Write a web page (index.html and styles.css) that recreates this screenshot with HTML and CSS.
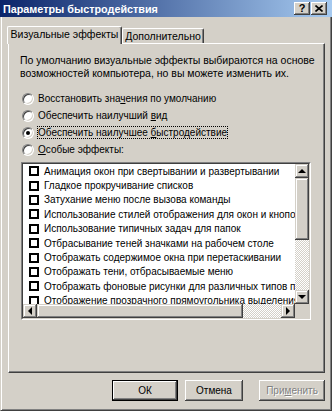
FILE: index.html
```html
<!DOCTYPE html>
<html lang="ru">
<head>
<meta charset="utf-8">
<title>Параметры быстродействия</title>
<link rel="stylesheet" href="styles.css">
</head>
<body>
<div class="window">
  <div class="titlebar">
    <span class="title">Параметры быстродействия</span>
    <div class="caption-buttons">
      <span class="cap-btn">?</span>
      <span class="cap-btn">
        <svg width="8" height="7" viewBox="0 0 8 7"><path d="M0.5 0.5 L7.5 6.5 M7.5 0.5 L0.5 6.5" stroke="#000" stroke-width="1.6" fill="none"/></svg>
      </span>
    </div>
  </div>
  <div class="client">
    <div class="tabs">
      <div class="tab active">Визуальные эффекты</div>
      <div class="tab">Дополнительно</div>
    </div>
    <div class="panel">
      <p class="intro">По умолчанию визуальные эффекты выбираются на основе<br>возможностей компьютера, но вы можете изменить их.</p>
      <div class="radios">
        <div class="radio-row"><span class="radio"></span><span class="label">Восстановить зна<u>ч</u>ения по умолчанию</span></div>
        <div class="radio-row"><span class="radio"></span><span class="label">Обеспечить наилучший <u>в</u>ид</span></div>
        <div class="radio-row"><span class="radio checked"></span><span class="label focus">Обеспечить наилучшее <u>б</u>ыстродействие</span></div>
        <div class="radio-row"><span class="radio"></span><span class="label"><u>О</u>собые эффекты:</span></div>
      </div>
      <div class="listbox">
        <div class="lb-inner">
          <div class="items">
            <div class="item"><span class="check"></span>Анимация окон при свертывании и развертывании</div>
            <div class="item"><span class="check"></span>Гладкое прокручивание списков</div>
            <div class="item"><span class="check"></span>Затухание меню после вызова команды</div>
            <div class="item"><span class="check"></span>Использование стилей отображения для окон и кнопок</div>
            <div class="item"><span class="check"></span>Использование типичных задач для папок</div>
            <div class="item"><span class="check"></span>Отбрасывание теней значками на рабочем столе</div>
            <div class="item"><span class="check"></span>Отображать содержимое окна при перетаскивании</div>
            <div class="item"><span class="check"></span>Отображать тени, отбрасываемые меню</div>
            <div class="item"><span class="check"></span>Отображать фоновые рисунки для различных типов папок</div>
            <div class="item"><span class="check"></span>Отображение прозрачного прямоугольника выделения</div>
          </div>
          <div class="vscroll">
            <div class="sb-btn"><span class="arr up"></span></div>
            <div class="thumb v"></div>
            <div class="track"></div>
            <div class="sb-btn"><span class="arr down"></span></div>
          </div>
          <div class="hscroll">
            <div class="sb-btn"><span class="arr left"></span></div>
            <div class="thumb h"></div>
            <div class="track"></div>
            <div class="sb-btn"><span class="arr right"></span></div>
          </div>
          <div class="corner"></div>
        </div>
      </div>
    </div>
    <div class="buttons">
      <div class="btn default ok"><span>ОК</span></div>
      <div class="btn cancel">Отмена</div>
      <div class="btn apply disabled">При<u>м</u>енить</div>
    </div>
  </div>
</div>
</body>
</html>
```
FILE: styles.css
```css
* { box-sizing: border-box; }
html, body { margin: 0; padding: 0; }
body {
  width: 332px;
  height: 411px;
  overflow: hidden;
  background: #d4d0c8;
  font-family: "Liberation Sans", Arial, sans-serif;
  font-size: 10.5px;
  color: #000;
}
u { text-decoration: underline; }
.window {
  width: 332px;
  height: 411px;
  display: flex;
  flex-direction: column;
}
.titlebar {
  height: 17px;
  flex: none;
  display: flex;
  align-items: center;
  justify-content: space-between;
  background: linear-gradient(to right, #0a246a, #a6caf0);
  padding: 0 5px 0 3px;
}
.title {
  color: #fff;
  font-weight: bold;
  font-size: 10.8px;
}
.caption-buttons { display: flex; gap: 1px; }
.cap-btn {
  width: 16px;
  height: 13px;
  background: #d4d0c8;
  box-shadow: inset -1px -1px #404040, inset 1px 1px #fff, inset -2px -2px #808080;
  display: flex;
  align-items: center;
  justify-content: center;
  font-weight: bold;
  font-size: 11px;
  line-height: 13px;
  padding-bottom: 1px;
}
.client {
  flex: 1;
  display: flex;
  flex-direction: column;
  border-left: 1px solid #d4d0c8;
  border-right: 1px solid #404040;
  border-bottom: 1px solid #404040;
  box-shadow: inset 1px 0 #fff, inset -1px -1px #808080;
  padding: 9px 6px 0 7px;
}
.tabs {
  display: flex;
  align-items: flex-end;
  height: 18px;
  margin-bottom: -1px;
  position: relative;
  z-index: 1;
}
.tab {
  height: 15px;
  margin-bottom: 1px;
  width: 82px;
  text-align: center;
  line-height: 14px;
  background: #d4d0c8;
  border-top: 1px solid #fff;
  border-left: 1px solid #fff;
  border-right: 1px solid #404040;
  box-shadow: inset -1px 0 #808080;
  border-radius: 2px 2px 0 0;
}
.tab.active {
  height: 18px;
  margin-bottom: 0;
  width: 115px;
  margin-left: -1px;
  line-height: 15px;
}
.panel {
  height: 330px;
  border: 1px solid;
  border-color: #fff #404040 #404040 #fff;
  box-shadow: inset -1px -1px #808080;
  padding: 10px 0 0 11px;
}
.intro {
  margin: 0;
  line-height: 13px;
}
.radios { margin-top: 10px; font-size: 10px; }
.radio-row {
  height: 17px;
  display: flex;
  align-items: center;
}
.radio {
  width: 12px;
  height: 12px;
  margin-left: 2px;
  border-radius: 50%;
  background: #fff;
  border: 1px solid;
  border-color: #808080 #fff #fff #808080;
  box-shadow: inset 1px 1px #404040, inset -1px -1px #d4d0c8;
  display: flex;
  align-items: center;
  justify-content: center;
}
.radio.checked::after {
  content: "";
  width: 4px;
  height: 4px;
  border-radius: 50%;
  background: #000;
}
.label { margin-left: 4px; }
.focus { outline: 1px dotted #000; }
.listbox {
  margin-top: 4px;
  margin-left: 1px;
  width: 290px;
  height: 158px;
  border: 1px solid;
  border-color: #808080 #fff #fff #808080;
}
.lb-inner {
  width: 100%;
  height: 100%;
  border: 1px solid;
  border-color: #404040 #d4d0c8 #d4d0c8 #404040;
  display: grid;
  grid-template-columns: 272px 14px;
  grid-template-rows: 140px 14px;
}
.items {
  background: #fff;
  overflow: hidden;
  font-size: 10px;
}
.item {
  height: 14.4px;
  display: flex;
  align-items: center;
  padding-left: 6px;
  white-space: nowrap;
}
.check {
  flex: none;
  width: 10px;
  height: 10px;
  border: 2px solid #000;
  background: #fff;
  margin-right: 5px;
}
.vscroll { display: flex; flex-direction: column; }
.hscroll { display: flex; }
.sb-btn, .thumb {
  background: #d4d0c8;
  box-shadow: inset -1px -1px #404040, inset 1px 1px #d4d0c8, inset -2px -2px #808080, inset 2px 2px #fff;
}
.sb-btn {
  flex: none;
  width: 14px;
  height: 14px;
  display: flex;
  align-items: center;
  justify-content: center;
}
.thumb.v { height: 62px; flex: none; }
.thumb.h { width: 206px; flex: none; }
.track {
  flex: 1;
  background: repeating-conic-gradient(#fff 0 25%, #d4d0c8 0 50%) 0 0 / 2px 2px;
}
.corner { background: #d4d0c8; }
.arr { width: 0; height: 0; border: 4px solid transparent; }
.arr.up { border-bottom-color: #000; border-top-width: 0; margin-top: -1px; }
.arr.down { border-top-color: #000; border-bottom-width: 0; }
.arr.left { border-right-color: #000; border-left-width: 0; margin-left: -1px; }
.arr.right { border-left-color: #000; border-right-width: 0; }
.buttons {
  margin-top: 7px;
  display: flex;
  justify-content: flex-end;
}
.btn {
  height: 21px;
  width: 66px;
  display: flex;
  align-items: center;
  justify-content: center;
  font-size: 10px;
  background: #d4d0c8;
  box-shadow: inset -1px -1px #404040, inset 1px 1px #fff, inset -2px -2px #808080;
}
.btn.default {
  border: 1px solid #000;
}
.btn.cancel { width: 58px; margin-left: 7px; }
.btn.apply { margin-left: 16px; }
.btn.disabled {
  color: #808080;
  text-shadow: 1px 1px #fff;
}
```
